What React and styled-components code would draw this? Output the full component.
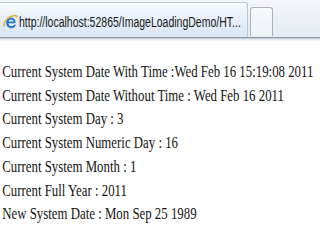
import React from "react";
import styled, { createGlobalStyle } from "styled-components";

const GlobalStyle = createGlobalStyle`
  html, body {
    margin: 0;
    padding: 0;
    background: #ffffff;
  }
  body {
    width: 320px;
    height: 250px;
    overflow: hidden;
  }
`;

const lines = [
  "Current System Date With Time :Wed Feb 16 15:19:08 2011",
  "Current System Date Without Time : Wed Feb 16 2011",
  "Current System Day : 3",
  "Current System Numeric Day : 16",
  "Current System Month : 1",
  "Current Full Year : 2011",
  "New System Date : Mon Sep 25 1989",
];

const IeIcon = () => (
  <svg width="15" height="16" viewBox="0 0 15 16">
    <path
      d="M1.5 12.5 C0 9.5 3 4.5 8 2.5 C12 1 14.5 1.5 14 3.5"
      fill="none"
      stroke="#e8b030"
      strokeWidth="1.6"
    />
    <path
      d="M12.2 9.2 H5.4 C5.6 11 6.8 12.2 8.4 12.2 C9.6 12.2 10.5 11.6 11 10.8 H13 C12.2 12.8 10.4 14.2 8.3 14.2 C5.4 14.2 3.2 11.9 3.2 9 C3.2 6.1 5.4 3.8 8.3 3.8 C11.3 3.8 13.2 6.1 12.2 9.2 Z M5.5 7.6 H10.8 C10.5 6.3 9.5 5.6 8.2 5.6 C6.9 5.6 5.9 6.3 5.5 7.6 Z"
      fill="#1a76d2"
    />
  </svg>
);

const Page = styled.div`
  width: 320px;
  height: 250px;
  background: #ffffff;
  overflow: hidden;
`;

const TabStrip = styled.div`
  display: flex;
  align-items: flex-end;
  height: 38px;
  padding-top: 3px;
  box-sizing: border-box;
  background: linear-gradient(180deg, #f3f6fa 0%, #e6ecf3 100%);
  border-bottom: 1px solid #8e98a6;
  box-shadow: 0 1px 0 #c8ced6, 0 2px 0 #e4e7eb, 0 3px 0 #f2f3f5;
`;

const Tab = styled.div`
  display: flex;
  align-items: center;
  width: 248px;
  height: 35px;
  box-sizing: border-box;
  padding: 0 0 0 3px;
  background: linear-gradient(180deg, #f8fbfe 0%, #e7eff9 45%, #dbe6f4 100%);
  border: 1px solid #b9c6d6;
  border-left: none;
  border-bottom: none;
  border-radius: 0 3px 0 0;
`;

const IconBox = styled.span`
  flex: 0 0 15px;
  display: flex;
  margin-top: 3px;
  margin-right: 1px;
`;

const Url = styled.span`
  flex: 0 0 auto;
  display: inline-block;
  font-family: "Liberation Sans", Arial, sans-serif;
  font-size: 14px;
  color: #1a1a1a;
  white-space: nowrap;
  transform: scaleX(0.75);
  transform-origin: left center;
  margin-top: 4px;
  margin-right: -75px;
`;

const NewTab = styled.div`
  align-self: center;
  width: 23px;
  height: 29px;
  margin: 3px 0 0 2px;
  box-sizing: border-box;
  border: 1px solid #a9b1bc;
  border-bottom: none;
  border-radius: 3px 3px 0 0;
  background: linear-gradient(180deg, #f7f9fb 0%, #eef2f6 100%);
`;

const Content = styled.div`
  padding: 22px 0 0 3px;
  transform: scaleX(0.755);
  transform-origin: left top;
  width: 430px;
`;

const Line = styled.div`
  font-family: "Liberation Serif", "Times New Roman", serif;
  font-size: 17px;
  line-height: 23.7px;
  color: #141414;
  white-space: nowrap;
`;

export default function App() {
  return (
    <Page>
      <GlobalStyle />
      <TabStrip>
        <Tab>
          <IconBox>
            <IeIcon />
          </IconBox>
          <Url>http://localhost:52865/ImageLoadingDemo/HT...</Url>
        </Tab>
        <NewTab />
      </TabStrip>
      <Content>
        {lines.map((l) => (
          <Line key={l}>{l}</Line>
        ))}
      </Content>
    </Page>
  );
}
